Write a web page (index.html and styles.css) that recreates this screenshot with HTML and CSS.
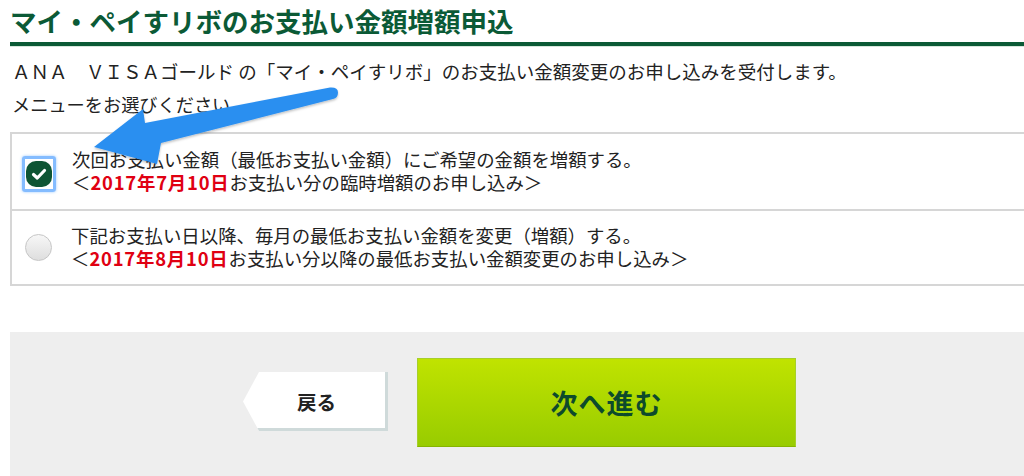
FILE: index.html
```html
<!DOCTYPE html>
<html lang="ja">
<head>
    <meta charset="UTF-8">
    <meta name="viewport" content="width=device-width, initial-scale=1.0">
    <title>マイ・ペイすリボのお支払い金額増額申込</title>
    <link rel="stylesheet" href="styles.css">
</head>
<body>
    <div class="page">
        <h1 class="title">マイ・ペイすリボのお支払い金額増額申込</h1>

        <p class="intro">ＡＮＡ　ＶＩＳＡゴールド の「マイ・ペイすリボ」のお支払い金額変更のお申し込みを受付します。</p>
        <p class="lead">メニューをお選びください。</p>

        <div class="options">
            <label class="option">
                <span class="check checked">
                    <svg viewBox="0 0 26 26" width="26" height="26">
                        <rect x="0" y="0" width="26" height="26" rx="10" fill="#0e5534"/>
                        <path d="M7.5 13.5 L11.3 17 L18.5 9.5" fill="none" stroke="#fff" stroke-width="3.2" stroke-linecap="round" stroke-linejoin="round"/>
                    </svg>
                </span>
                <span class="option-text">
                    次回お支払い金額（最低お支払い金額）にご希望の金額を増額する。<br>
                    ＜<strong class="date">2017年7月10日</strong>お支払い分の臨時増額のお申し込み＞
                </span>
            </label>
            <label class="option">
                <span class="radio"></span>
                <span class="option-text">
                    下記お支払い日以降、毎月の最低お支払い金額を変更（増額）する。<br>
                    ＜<strong class="date">2017年8月10日</strong>お支払い分以降の最低お支払い金額変更のお申し込み＞
                </span>
            </label>
        </div>

        <div class="actions">
            <a class="btn-back" href="#">戻る</a>
            <a class="btn-next" href="#">次へ進む</a>
        </div>
    </div>

    <!-- annotation arrow -->
    <svg class="arrow" width="360" height="180" viewBox="0 0 360 180">
        <defs>
            <filter id="sh" x="-10%" y="-10%" width="120%" height="130%">
                <feDropShadow dx="0" dy="1.5" stdDeviation="1.2" flood-color="#000" flood-opacity="0.25"/>
            </filter>
        </defs>
        <path filter="url(#sh)" fill="#2b8ff0"
              d="M94 147 L143 109 L145 123 L330 87.5 Q338 87 338 92.5 Q338 98 333 99 L161 143 L157 164 Z"/>
    </svg>
</body>
</html>
```

FILE: styles.css
```css
* {
    margin: 0;
    padding: 0;
    box-sizing: border-box;
}
body {
    background: #fff;
    font-family: "Noto Sans CJK JP", "Noto Sans", sans-serif;
    color: #222;
    overflow: hidden;
}
.page {
    padding-left: 10px;
}
.title {
    font-size: 26.5px;
    line-height: 36px;
    padding-top: 3px;
    font-weight: bold;
    color: #0b5a36;
    border-bottom: 4px solid #0b5a36;
    box-shadow: 0 1px 0 #d6e7dc;
    height: 46px;
    white-space: nowrap;
}
.intro {
    font-size: 18.5px;
    line-height: 24px;
    margin-top: 13px;
    padding-left: 2px;
    white-space: nowrap;
}
.lead {
    font-size: 18.2px;
    line-height: 24px;
    margin-top: 9px;
    padding-left: 2px;
}
.options {
    margin-top: 16px;
    border: 2px solid #d6d6d6;
    border-right: none;
}
.option {
    display: flex;
    align-items: center;
    height: 75px;
    padding-bottom: 2px;
}
.option + .option {
    border-top: 2px solid #d6d6d6;
}
.option-text {
    font-size: 18.4px;
    line-height: 22.5px;
    white-space: nowrap;
}
.option .check + .option-text {
    margin-left: 16px;
}
.date {
    color: #e00012;
    font-weight: bold;
    letter-spacing: 0.8px;
}
.check {
    margin-left: 10px;
    margin-top: 6px;
    width: 34px;
    height: 36px;
    display: flex;
    align-items: center;
    justify-content: center;
    border: 3px solid #84bcff;
    border-radius: 3px;
    box-shadow: 0 0 3px #9cc9ff;
}
.check svg {
    display: block;
}
.radio {
    margin-left: 13px;
    margin-top: 2px;
    width: 27px;
    height: 27px;
    border-radius: 50%;
    border: 1px solid #c6c6c6;
    background: linear-gradient(#f7f7f7, #dedede);
    flex-shrink: 0;
}
.option .radio + .option-text {
    margin-left: 19px;
}
.actions {
    margin-top: 46px;
    background: #eeeeee;
    height: 160px;
    display: flex;
    justify-content: center;
    align-items: flex-start;
    gap: 29px;
    padding-top: 26px;
    padding-left: 5px;
}
.btn-back {
    margin-top: 14px;
    width: 145px;
    height: 59px;
    display: flex;
    align-items: center;
    justify-content: center;
    padding-left: 2px;
    background: #fff;
    color: #222;
    font-size: 19.5px;
    font-weight: bold;
    text-decoration: none;
    clip-path: polygon(16px 0, 100% 0, 100% 100%, 16px 100%, 0 50%);
    box-shadow: inset -3px -3px 0 #cfdada;
}
.btn-next {
    width: 379px;
    height: 89px;
    display: flex;
    align-items: center;
    justify-content: center;
    background: linear-gradient(#c0e300, #98cc00);
    border: 1px solid #a7cf2a;
    border-bottom-color: #86b400;
    color: #0d4a2c;
    font-size: 27px;
    font-weight: bold;
    text-decoration: none;
    letter-spacing: 1px;
}
.arrow {
    position: absolute;
    left: 0;
    top: 0;
    pointer-events: none;
}
```
